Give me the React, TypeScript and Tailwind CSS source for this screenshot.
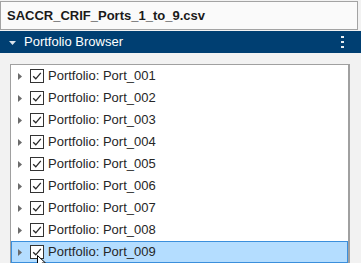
const ports = ['001', '002', '003', '004', '005', '006', '007', '008', '009'];

function Check() {
  return (
    <span className="flex h-[14px] w-[14px] items-center justify-center border border-[#333] bg-white">
      <svg width="10" height="10" viewBox="0 0 10 10" fill="none">
        <path d="M1.2 5.2 L3.8 7.8 L8.8 1.8" stroke="#262626" strokeWidth="1.3" />
      </svg>
    </span>
  );
}

export default function App() {
  return (
    <div className="h-[263px] w-[361px] overflow-hidden bg-[#f2f2f2] font-['Liberation_Sans',Arial,sans-serif]">
      {/* file name field */}
      <div className="pt-px pr-[3px]">
        <div className="flex h-[29px] items-center border border-[#a3a3a3] bg-[#fafafa] pl-[6px] text-[13px] font-bold text-[#1a1a1a]">
          SACCR_CRIF_Ports_1_to_9.csv
        </div>
      </div>

      {/* header */}
      <div className="mt-px flex h-[22px] items-center bg-[#003f72] pl-[9px] pr-[17px] text-[13px] text-white">
        <svg width="7" height="4" viewBox="0 0 7 4" className="mr-[8px] mt-px">
          <path d="M0 0 H7 L3.5 4 Z" fill="#d9e3ec" />
        </svg>
        <span>Portfolio Browser</span>
        <svg width="3" height="12" viewBox="0 0 3 12" className="ml-auto">
          <rect x="0" y="0" width="3" height="2" fill="#e6edf3" />
          <rect x="0" y="5" width="3" height="2" fill="#e6edf3" />
          <rect x="0" y="10" width="3" height="2" fill="#e6edf3" />
        </svg>
      </div>

      {/* tree */}
      <div className="ml-[10px] mr-[11px] mt-[11px] border border-r-2 border-[#a0a0a0] bg-white">
        {ports.map((p, i) => {
          const sel = i === ports.length - 1;
          return (
            <div
              key={p}
              className={`relative flex h-[22px] items-center pl-[6px] text-[13px] text-[#262626] ${
                sel ? 'border border-[#3b8fdc] bg-[#b4ddff]' : 'border border-transparent'
              }`}
            >
              <svg width="4" height="7" viewBox="0 0 4 7" className="mr-[8px]">
                <path d="M0 0 L4 3.5 L0 7 Z" fill="#6b6b6b" />
              </svg>
              <Check />
              <span className="ml-[4px]">Portfolio: Port_{p}</span>
              {sel && (
                <svg
                  width="10"
                  height="14"
                  viewBox="0 0 10 14"
                  className="absolute left-[25px] top-[13px]"
                >
                  <path d="M0.5 0.5 L0.5 11 L3 8.6 L5 13 L6.8 12.2 L4.9 8 L8.5 8 Z" fill="#fff" stroke="#000" strokeWidth="1" />
                </svg>
              )}
            </div>
          );
        })}
      </div>
    </div>
  );
}
